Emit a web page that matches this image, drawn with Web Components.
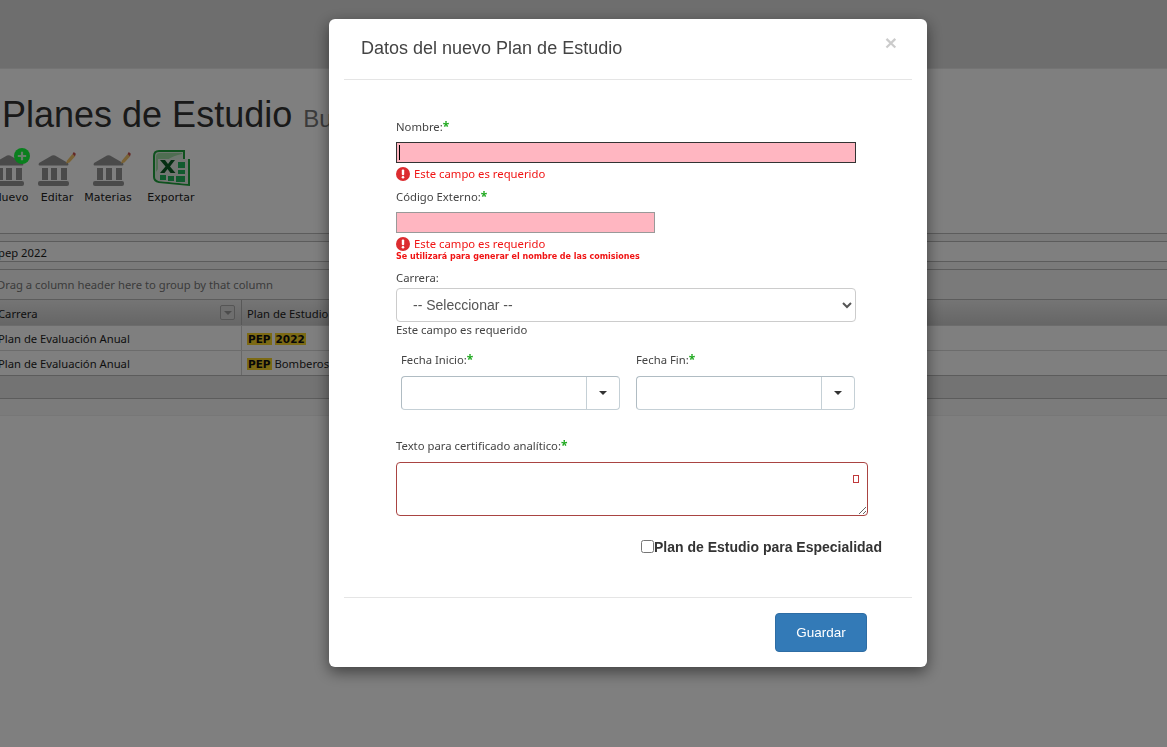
<!DOCTYPE html>
<html lang="es"><head><meta charset="utf-8"><title>Planes de Estudio</title>
<style>
html,body{margin:0;padding:0;height:100%;overflow:hidden;background:#fff}
body{font-family:"Liberation Sans",Arial,sans-serif;color:#333}
</style></head><body>
<plan-page></plan-page>
<modal-backdrop></modal-backdrop>
<plan-modal>
  <form-label style="--top:39px">Nombre:</form-label>
  <text-field caret width="460" style="--top:7px"></text-field>
  <field-error style="--top:3px">Este campo es requerido</field-error>
  <form-label style="--top:7px">Código Externo:</form-label>
  <text-field plain width="259" style="--top:7px"></text-field>
  <field-error style="--top:3px">Este campo es requerido</field-error>
  <field-hint>Se utilizará para generar el nombre de las comisiones</field-hint>
  <form-label plain style="--top:8px">Carrera:</form-label>
  <select-field style="--top:2px"></select-field>
  <form-label plain style="--top:0px">Este campo es requerido</form-label>
  <date-row></date-row>
  <form-label style="--top:28px">Texto para certificado analítico:</form-label>
  <area-field></area-field>
  <check-field></check-field>
</plan-modal>
<script>
function def(name, html){
  customElements.define(name, class extends HTMLElement{
    connectedCallback(){
      if(this.shadowRoot) return;
      const r=this.attachShadow({mode:'open'});
      r.innerHTML=typeof html==='function'?html(this):html;
    }
  });
}
const SMALL='"DejaVu Sans","Noto Sans",sans-serif';
const BODY='"Noto Sans","DejaVu Sans",sans-serif';
const bank=(extra)=>`<svg width="38" height="38" viewBox="0 -2 38 38" aria-hidden="true">
<path d="M14 5.500 Q15.500 4.800 17 5.500 L30 13 Q31 15.500 29.500 15.500 L1.500 15.500 Q0 15.500 1 13Z" fill="#949494"/>
<rect x="4" y="18" width="6" height="12" fill="#949494"/><rect x="13" y="18" width="6" height="12" fill="#949494"/><rect x="23" y="18" width="6" height="12" fill="#949494"/>
<rect x="0" y="31" width="31" height="5" rx="2" fill="#949494"/>${extra}</svg>`;
const pencil=`<path d="M29 10.500 L34.500 4 L37 6.500 L31.500 12.500 L28 13.500Z" fill="#f2c46a"/><path d="M34.500 4 L35.800 2 L37.800 3.800 L37 6.500Z" fill="#c8504a"/>`;
const plus=`<circle cx="29" cy="6" r="8" fill="#14ff3c"/><path d="M29 1.800V10.200M24.800 6H33.200" stroke="#fff" stroke-width="2.200" opacity=".8"/>`;
const excel=`<svg width="38" height="38" viewBox="0 0 38 38" aria-hidden="true">
<path d="M6 1 H31 V10 H36 V35 L6 32 Q1 31 1 27 V6 Q1 1 6 1Z" fill="#dfeee0" stroke="#1ea33c" stroke-width="2"/>
<path d="M3 22 Q12 7 29 4 V3 H7 Q3 3 3 7Z" fill="#9edca4"/>
<path d="M5 9 H35 V34 L5 31Z" fill="#e6ece6"/>
<path d="M7 10 h5 l3 4 l3 -4 h4 l-5 6.500 l5.500 6.500 h-5 l-3 -4 l-3 4 h-4.500 l5.500 -6.500z" fill="#0b5c25"/>
<path d="M25 12h7v6h-7zM25 20h7v4h-7zM7 25h6v5H7zM15 26h6v5h-6zM23 26h9v6h-9z" fill="#22b45c"/></svg>`;

def('tool-item',`<style>:host{display:flex;flex-direction:column;align-items:center;font:11px/14px ${SMALL};color:#222}
.i{height:38px;display:flex;align-items:flex-start;justify-content:center}.l{margin-top:5px;white-space:nowrap}</style>
<div class="i"><slot name="icon"></slot></div><div class="l"><slot></slot></div>`);

def('plan-toolbar',`<style>:host{display:flex;margin:9px 0 0 -6px;height:85px;align-items:flex-start}
tool-item{flex:none}svg{display:block}</style>
<tool-item style="width:34px"><span slot="icon" style="margin-left:1px">${bank(plus)}</span>Nuevo</tool-item>
<tool-item style="width:32px;margin-left:13px"><span slot="icon" style="margin-left:0">${bank(pencil)}</span>Editar</tool-item>
<tool-item style="width:46px;margin-left:12px"><span slot="icon" style="margin-left:7px">${bank(pencil)}</span>Materias</tool-item>
<tool-item style="width:48px;margin-left:16px"><span slot="icon" style="margin:2px 0 0 2px">${excel}</span>Exportar</tool-item>`);

def('data-grid',`<style>:host{display:block;margin:0 0 0 -6px;font:11.250px/16px ${BODY};color:#1e1e1e}
.bar{height:7px;border-top:1px solid #b8b8b8;background:#f4f4f4}
.search{height:19px;border-top:1px solid #b8b8b8;border-bottom:1px solid #b8b8b8;padding:0 0 0 4px;line-height:22px;background:#fff}
.gap{height:7px;background:#f4f4f4}
.drop{height:29px;border-top:1px solid #b8b8b8;line-height:30px;color:#777;padding-left:3px;background:#f4f4f4}
.row{display:grid;grid-template-columns:247px 1fr;height:24px;border-top:1px solid #d8d8d8;line-height:26px;background:#fff}
.head{height:25px;border-top:1px solid #b8b8b8;background:linear-gradient(#eaeaea,#cccccc);line-height:27px}
.c{padding-left:4px;position:relative;white-space:nowrap;overflow:hidden}
.c+.c{border-left:1px solid #d0d0d0;padding-left:5px}
.head .c+.c{border-left-color:#b0b0b0}
.f{position:absolute;left:226px;top:5px;width:13px;height:13px;border:1px solid #aaa;border-radius:2px;background:#ddd}
.f:after{content:"";position:absolute;left:3px;top:5px;border:4px solid transparent;border-top-color:#999;border-bottom:0}
mark{background:#f8d428;color:#111;font:700 10.500px/14px ${SMALL};padding:0 1px}
.foot{height:22px;border-top:1px solid #b8b8b8;background:#e6e6e6}
.pager{height:16px;border-top:1px solid #b8b8b8;background:#f6f6f6;border-bottom:1px solid #eee}</style>
<div class="bar"></div>
<div class="search">pep 2022</div>
<div class="gap"></div>
<div class="drop">Drag a column header here to group by that column</div>
<div class="row head"><div class="c">Carrera<span class="f"></span></div><div class="c">Plan de Estudio</div></div>
<div class="row"><div class="c">Plan de Evaluación Anual</div><div class="c"><mark>PEP</mark> <mark>2022</mark></div></div>
<div class="row"><div class="c">Plan de Evaluación Anual</div><div class="c"><mark>PEP</mark> Bomberos</div></div>
<div class="foot"></div><div class="pager"></div>`);

def('plan-page',`<style>:host{display:block;height:747px;background:#fff;overflow:hidden}
.top{height:69px;background:#dcdcdc;border-bottom:1px solid #e8e8e8;box-sizing:border-box}
h1{margin:21px 0 0 2px;height:49px;font:400 36px/49px "Liberation Sans",Arial,sans-serif;color:#333;white-space:nowrap}
small{font-size:24px;color:#777;margin-left:1px}</style>
<div class="top"></div>
<h1>Planes de Estudio <small>Bu</small></h1>
<plan-toolbar></plan-toolbar><data-grid></data-grid>`);

def('modal-backdrop',`<style>:host{display:block;position:fixed;inset:0;background:rgba(0,0,0,.5)}</style>`);

def('plan-modal',`<style>:host{position:fixed;left:329px;top:19px;width:598px;height:648px;background:#fff;border-radius:6px;box-shadow:0 5px 15px rgba(0,0,0,.5);display:flex;flex-direction:column}
header{margin:0 15px;height:61px;border-bottom:1px solid #e5e5e5;position:relative;box-sizing:border-box;flex:none}
h4{margin:0;padding:18px 0 0 17px;font:400 18px/22px "Liberation Sans",Arial,sans-serif;color:#444}
.x{position:absolute;right:15px;top:13px;font:700 21px/21px "Liberation Sans",Arial,sans-serif;color:#000;opacity:.2}
main{flex:1;padding:0 0 0 67px;display:flex;flex-direction:column;align-items:flex-start}
footer{margin:0 15px;height:70px;box-sizing:border-box;border-top:1px solid #e5e5e5;display:flex;justify-content:flex-end;align-items:flex-start;padding:15px 45px 0 0;flex:none}
button{width:92px;height:39px;background:#337ab7;border:1px solid #2e6da4;border-radius:4px;color:#fff;font:13.500px "Liberation Sans",Arial,sans-serif;padding:0}</style>
<header><h4>Datos del nuevo Plan de Estudio</h4><span class="x">×</span></header>
<main><slot></slot></main>
<footer><button type="button">Guardar</button></footer>`);

def('form-label',(h)=>`<style>:host{display:block;margin-top:var(--top,0);font:11.300px/16px ${BODY};color:#444;white-space:nowrap}
i{font-style:normal;color:#22aa22;font-size:12px;font-weight:700;line-height:10px}</style><slot></slot>${h.hasAttribute('plain')?'':'<i>*</i>'}`);

def('text-field',(h)=>`<style>:host{display:block;margin-top:var(--top,0);position:relative;box-sizing:border-box;width:${h.getAttribute('width')}px;height:21px}
input{display:block;box-sizing:border-box;width:100%;height:100%;margin:0;background:#ffb6c1;border:1px solid ${h.hasAttribute('plain')?'#999':'#333'};padding:0 3px;outline:0;border-radius:0}
.c{position:absolute;left:3px;top:3px;width:1px;height:15px;background:#000}</style>
<input type="text" aria-label="campo">${h.hasAttribute('caret')?'<span class="c"></span>':''}`);

def('field-error',`<style>:host{display:flex;align-items:center;margin-top:var(--top,0);height:16px;font:11.300px/16px ${BODY};color:#f01414;white-space:nowrap;gap:4px}svg{flex:none}</style>
<svg width="14" height="14" viewBox="0 0 14 14" aria-hidden="true"><circle cx="7" cy="7" r="7" fill="#dc2c30"/><rect x="5.800" y="2.500" width="2.400" height="5.800" rx="1" fill="#fff"/><circle cx="7" cy="10.300" r="1.300" fill="#fff"/></svg><slot></slot>`);

def('field-hint',`<style>:host{display:block;height:10px;font:700 8px/10px ${SMALL};color:#f01414;white-space:nowrap}</style><slot></slot>`);

def('select-field',`<style>:host{display:block;margin-top:var(--top,0);width:460px;height:34px}
select{display:block;box-sizing:border-box;width:100%;height:100%;margin:0;background:#fff;border:1px solid #ccc;border-radius:4px;padding:6px 12px;font:14px "Liberation Sans",Arial,sans-serif;color:#555}</style>
<select aria-label="Carrera"><option>-- Seleccionar --</option></select>`);

def('date-picker',`<style>:host{display:block}
.l{font:11.300px/16px ${BODY};color:#444;white-space:nowrap}i{font-style:normal;color:#22aa22;font-size:12px;font-weight:700;line-height:10px}
.p{margin-top:8px;display:flex;width:219px;height:34px;box-sizing:border-box;border:1px solid #c5d0d6;border-top-color:#b0bcc3;border-left-color:#b0bcc3;border-radius:4px;background:#fff}
.t{flex:1;border-right:1px solid #c5d0d6}.b{width:32px;display:flex;align-items:center;justify-content:center}
.b:after{content:"";border:4px solid transparent;border-top-color:#333;border-bottom:0}</style>
<div class="l"><slot></slot><i>*</i></div><div class="p"><div class="t"></div><div class="b"></div></div>`);

def('date-row',`<style>:host{display:flex;gap:16px;margin:14px 0 0 5px}</style>
<date-picker>Fecha Inicio:</date-picker><date-picker>Fecha Fin:</date-picker>`);

def('area-field',`<style>:host{display:block;position:relative;margin-top:8px;width:472px;height:54px}
textarea{display:block;box-sizing:border-box;width:100%;height:100%;margin:0;border:1px solid #a94442;border-radius:4px;background:#fff;outline:0;padding:6px 12px}
.g{position:absolute;right:9px;top:13px;width:4px;height:6px;border:1px solid #c0393b}</style>
<textarea aria-label="Texto para certificado analítico"></textarea><span class="g"></span>`);

def('check-field',`<style>:host{display:flex;align-items:center;margin:21px 0 0 245px;height:20px;font:700 14px/20px "Liberation Sans",Arial,sans-serif;color:#333;white-space:nowrap}
input{margin:0;width:13px;height:13px;position:relative;top:-1px;flex:none}</style>
<input type="checkbox" aria-label="Especialidad"><span>Plan de Estudio para Especialidad</span>`);
</script>
</body></html>
